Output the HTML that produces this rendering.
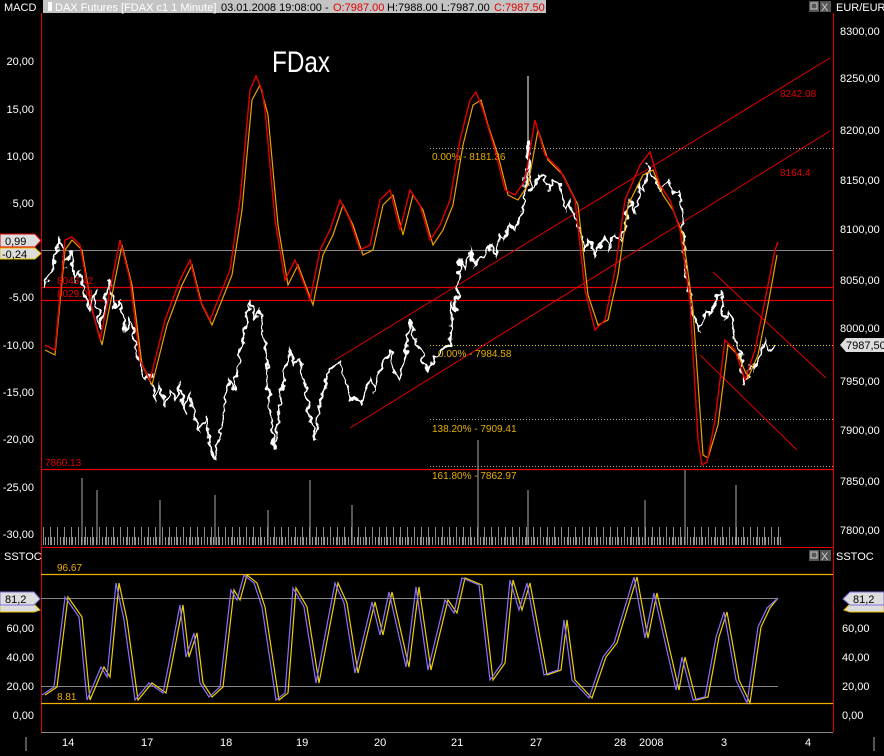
<!DOCTYPE html>
<html><head><meta charset="utf-8"><style>
html,body{margin:0;padding:0;background:#000;}
body{width:884px;height:751px;overflow:hidden;font-family:"Liberation Sans",sans-serif;}
svg text{font-family:"Liberation Sans",sans-serif;font-size:11px;}
</style></head><body>
<svg width="884" height="751" viewBox="0 0 884 751" xmlns="http://www.w3.org/2000/svg">
<defs>
<filter id="jag" x="-5%" y="-10%" width="110%" height="120%"><feTurbulence type="fractalNoise" baseFrequency="0.12" numOctaves="2" seed="3" result="t"/><feDisplacementMap in="SourceGraphic" in2="t" scale="10" xChannelSelector="R" yChannelSelector="G"/></filter>
<pattern id="vol" x="0" y="475" width="3" height="70" patternUnits="userSpaceOnUse"><rect x="0" y="62" width="1" height="8" fill="#999"/></pattern>
<pattern id="vol2" x="1" y="475" width="7" height="70" patternUnits="userSpaceOnUse"><rect x="0" y="52" width="1" height="18" fill="#888"/></pattern>
</defs>
<rect width="884" height="751" fill="#000"/>
<text x="4" y="11" fill="#fff">MACD</text>
<rect x="43" y="0" width="503" height="13" fill="#c4c4c4"/>
<rect x="48" y="2" width="4" height="9" fill="#fff"/>
<text x="55" y="11" fill="#fff">DAX Futures [FDAX c1  1 Minute]</text>
<text x="221" y="11" fill="#000">03.01.2008 19:08:00 -</text>
<text x="333" y="11" fill="#e00000">O:7987.00</text>
<text x="387" y="11" fill="#000">H:7988.00 L:7987.00</text>
<text x="494" y="11" fill="#e00000">C:7987.50</text>
<rect x="809" y="1" width="10" height="11" fill="#555"/><rect x="811" y="3" width="6" height="6" fill="none" stroke="#ccc"/>
<rect x="820" y="1" width="11" height="11" fill="#555"/><text x="821" y="11" fill="#ccc">X</text>
<text x="836" y="11" fill="#fff">EUR/EUR</text>
<line x1="41.5" y1="13" x2="41.5" y2="732" stroke="#e00000"/>
<line x1="833.5" y1="13" x2="833.5" y2="732" stroke="#e00000"/>
<line x1="41" y1="547.5" x2="833" y2="547.5" stroke="#e00000"/>
<line x1="41" y1="732.5" x2="833" y2="732.5" stroke="#888"/>
<g fill="#fff" text-anchor="end">
<text x="34" y="65">20,00</text><text x="34" y="113">15,00</text><text x="34" y="160">10,00</text>
<text x="34" y="207">5,00</text><text x="34" y="301">-5,00</text><text x="34" y="349">-10,00</text>
<text x="34" y="396">-15,00</text><text x="34" y="443">-20,00</text><text x="34" y="491">-25,00</text><text x="34" y="538">-30,00</text>
</g>
<g fill="#fff">
<text x="840" y="35">8300,00</text><text x="840" y="82">8250,00</text><text x="840" y="134">8200,00</text>
<text x="840" y="184">8150,00</text><text x="840" y="233">8100,00</text><text x="840" y="284">8050,00</text>
<text x="840" y="332">8000,00</text><text x="840" y="385">7950,00</text><text x="840" y="434">7900,00</text>
<text x="840" y="485">7850,00</text><text x="840" y="534">7800,00</text>
</g>
<line x1="41" y1="250.5" x2="833" y2="250.5" stroke="#888"/>
<line x1="41" y1="287.5" x2="833" y2="287.5" stroke="#e00000" stroke-width="1.3"/>
<line x1="41" y1="300.5" x2="833" y2="300.5" stroke="#e00000" stroke-width="1.3"/>
<line x1="41" y1="469.5" x2="833" y2="469.5" stroke="#e00000" stroke-width="1.3"/>
<line x1="430" y1="148.5" x2="833" y2="148.5" stroke="#aaa" stroke-dasharray="1,2"/>
<line x1="430" y1="345.5" x2="833" y2="345.5" stroke="#e8d000" stroke-dasharray="1,2"/>
<line x1="430" y1="419.5" x2="833" y2="419.5" stroke="#aaa" stroke-dasharray="1,2"/>
<line x1="430" y1="466.5" x2="833" y2="466.5" stroke="#aaa" stroke-dasharray="1,2"/>
<g stroke="#e00000" stroke-width="1">
<line x1="335" y1="360" x2="830" y2="58"/>
<line x1="350" y1="428" x2="830" y2="131"/>
<line x1="713" y1="272" x2="826" y2="378"/>
<line x1="700" y1="355" x2="797" y2="450"/>
</g>
<text x="272" y="72" fill="#fff" style="font-size:30px" textLength="58" lengthAdjust="spacingAndGlyphs">FDax</text>
<text x="780" y="97" fill="#e00000" style="font-size:10px">8242.08</text>
<text x="780" y="176" fill="#e00000" style="font-size:10px">8164.4</text>
<text x="432" y="160" fill="#e8b000" style="font-size:10px">0.00% - 8181.36</text>
<text x="438" y="357" fill="#e8b000" style="font-size:10px">0.00% - 7984.58</text>
<text x="432" y="432" fill="#e8b000" style="font-size:10px">138.20% - 7909.41</text>
<text x="432" y="479" fill="#e8b000" style="font-size:10px">161.80% - 7862.97</text>
<text x="45" y="466" fill="#e00000" style="font-size:10px">7860.13</text>
<text x="57" y="284" fill="#e00000" style="font-size:10px">8043.42</text>
<text x="57" y="297" fill="#e00000" style="font-size:10px">8029.04</text>
<rect x="43" y="475" width="740" height="70" fill="url(#vol)"/>
<rect x="43" y="475" width="740" height="70" fill="url(#vol2)"/>
<g stroke="#aaa">
<line x1="82" y1="478" x2="82" y2="545"/><line x1="97" y1="490" x2="97" y2="545"/><line x1="160" y1="500" x2="160" y2="545"/>
<line x1="215" y1="495" x2="215" y2="545"/><line x1="310" y1="480" x2="310" y2="545"/><line x1="478" y1="440" x2="478" y2="545"/>
<line x1="528" y1="490" x2="528" y2="545"/><line x1="685" y1="470" x2="685" y2="545"/><line x1="736" y1="485" x2="736" y2="545"/>
<line x1="645" y1="500" x2="645" y2="545"/><line x1="268" y1="510" x2="268" y2="545"/><line x1="352" y1="505" x2="352" y2="545"/>
</g>
<polyline filter="url(#jag)" fill="none" stroke="#fff" stroke-width="2" points="45,290 50,270 55,255 60,240 65,265 70,250 75,280 80,270 85,300 90,310 95,290 100,330 105,300 110,280 115,310 120,300 125,330 130,320 135,340 140,365 145,380 150,375 155,400 160,385 165,405 170,390 175,400 180,385 185,410 190,395 195,420 200,430 205,415 210,445 215,460 220,430 225,400 230,380 235,390 240,350 245,330 250,300 255,320 260,310 265,340 270,420 275,450 280,400 285,370 290,350 295,365 300,360 305,385 310,420 315,440 320,400 325,385 330,370 335,365 340,360 345,380 350,400 355,395 360,405 365,390 370,380 375,390 380,370 385,360 390,350 395,375 400,380 405,360 410,320 415,340 420,350 425,365 430,370 435,355 440,350 445,348 450,345 452,300 456,312 460,260 465,270 470,250 475,265 480,260 485,255 490,245 495,255 500,235 505,240 510,225 515,230 520,215 525,200 528,140 530,190 535,185 540,175 545,180 550,190 555,180 560,185 565,210 570,200 575,220 580,230 585,250 590,240 595,255 600,245 605,235 610,250 615,235 620,240 625,225 630,200 635,215 640,185 645,190 648,165 652,175 655,180 660,190 665,185 670,180 675,195 680,190 683,230 686,270 690,300 695,320 700,330 705,310 710,315 715,305 720,290 725,320 730,310 735,340 740,355 745,385 750,365 755,370 760,355 765,340 770,350 775,345"/>
<line x1="528" y1="76" x2="528" y2="150" stroke="#fff"/>
<polyline fill="none" stroke="#f0a000" stroke-width="1.2" points="45,350 55,355 65,250 72,240 82,250 92,310 102,345 112,295 122,245 132,285 142,365 152,385 167,325 182,285 192,265 202,305 212,325 232,275 242,210 252,100 260,85 268,115 278,225 288,285 298,265 313,305 323,255 333,235 343,205 353,225 363,255 373,250 383,205 393,195 403,235 413,195 423,210 433,245 443,230 453,205 463,145 473,105 481,100 488,125 498,155 508,195 518,200 528,185 538,130 548,160 563,175 578,205 588,295 598,325 608,320 618,275 628,205 643,175 653,170 663,195 673,210 683,235 693,310 703,455 708,458 718,425 728,345 738,355 748,378 758,355 768,305 777,255"/>
<polyline fill="none" stroke="#e00000" stroke-width="1.4" points="45,345 55,350 65,240 72,237 80,245 90,300 100,340 110,290 120,240 130,280 140,360 150,380 165,320 180,280 190,260 200,300 210,320 230,270 240,200 250,90 256,76 262,90 265,110 275,220 285,280 295,260 310,300 320,250 330,230 340,200 350,220 360,250 370,245 380,200 390,190 400,230 410,190 420,205 430,240 440,225 450,200 460,140 470,100 476,92 483,110 495,150 505,190 515,195 525,180 535,120 545,155 560,170 575,200 585,290 595,330 605,320 615,270 625,200 640,165 650,152 660,185 670,200 680,230 690,300 698,440 702,465 707,462 715,420 725,340 735,350 745,380 755,350 765,300 775,250 778,242"/>
<path d="M0,234 H35 L41,240.5 L35,247 H0Z" fill="#ddd" stroke="#e00000"/>
<text x="5" y="245" fill="#000">0,99</text>
<path d="M0,248 H35 L41,253.5 L35,259 H0Z" fill="#ddd" stroke="#e8c000"/>
<text x="2" y="258" fill="#000">-0,24</text>
<path d="M840,345 L846,338 H884 V352 H846Z" fill="#ddd"/>
<text x="846" y="349" fill="#000">7987,50</text>
<text x="4" y="560" fill="#fff">SSTOC</text>
<text x="836" y="560" fill="#fff">SSTOC</text>
<rect x="809" y="550" width="10" height="11" fill="#555"/><rect x="811" y="552" width="6" height="6" fill="none" stroke="#ccc"/>
<rect x="820" y="550" width="11" height="11" fill="#555"/><text x="821" y="560" fill="#ccc">X</text>
<line x1="41" y1="574.5" x2="833" y2="574.5" stroke="#f0b000" stroke-width="1.2"/>
<line x1="41" y1="703.5" x2="833" y2="703.5" stroke="#f0b000" stroke-width="1.2"/>
<line x1="41" y1="598.5" x2="778" y2="598.5" stroke="#888"/>
<line x1="41" y1="686.5" x2="778" y2="686.5" stroke="#888"/>
<text x="57" y="571" fill="#f0b000" style="font-size:10px">96.67</text>
<text x="57" y="700" fill="#f0b000" style="font-size:10px">8.81</text>
<g fill="#fff" text-anchor="end">
<text x="34" y="632">60,00</text><text x="34" y="661">40,00</text><text x="34" y="690">20,00</text><text x="34" y="719">0,00</text>
</g>
<g fill="#fff"><text x="842" y="632">60,00</text><text x="842" y="661">40,00</text><text x="842" y="690">20,00</text><text x="842" y="719">0,00</text></g>
<path d="M0,604 H34 L40,610 L34,612 H0Z" fill="#ddd" stroke="#e8c000"/>
<path d="M0,592 H34 L40,599 L34,605 H0Z" fill="#ddd" stroke="#8070e0"/>
<text x="5" y="603" fill="#000">81,2</text>
<path d="M884,604 H850 L844,610 L850,612 H884Z" fill="#ddd" stroke="#e8c000"/>
<path d="M884,592 H850 L843,599 L850,605 H884Z" fill="#ddd" stroke="#8070e0"/>
<text x="853" y="603" fill="#000">81,2</text>
<polyline fill="none" stroke="#f0d000" stroke-width="1.2" points="45,695 57,687 68,597 82,617 90,700 104,667 110,677 119,583 127,620 138,700 152,683 166,693 172,663 183,605 189,657 197,633 203,683 212,697 223,687 234,590 240,600 247,575 257,583 265,607 279,700 288,693 296,588 307,607 319,683 338,583 347,603 358,673 375,602 383,635 392,592 409,667 419,587 431,670 448,600 457,613 465,578 482,585 493,680 505,663 513,580 522,610 530,583 547,675 561,670 567,620 575,680 592,698 606,657 617,643 637,577 648,638 657,593 668,642 679,690 685,657 696,700 708,697 719,637 727,612 739,680 750,703 761,627 770,608 778,598"/>
<polyline fill="none" stroke="#8a70ff" stroke-width="1.2" points="42,695 54,687 65,597 79,617 87,700 101,667 107,677 116,583 124,620 135,700 149,683 163,693 169,663 180,605 186,657 194,633 200,683 209,697 220,687 231,590 237,600 244,575 254,583 262,607 276,700 285,693 293,588 304,607 316,683 335,583 344,603 355,673 372,602 380,635 389,592 406,667 416,587 428,670 445,600 454,613 462,578 479,585 490,680 502,663 510,580 519,610 527,583 544,675 558,670 564,620 572,680 589,698 603,657 614,643 634,577 645,638 654,593 665,642 676,690 682,657 693,700 705,697 716,637 724,612 736,680 747,703 758,627 767,608 778,598"/>
<g fill="#fff">
<text x="62" y="746">14</text><text x="141" y="746">17</text><text x="220" y="746">18</text><text x="296" y="746">19</text>
<text x="374" y="746">20</text><text x="451" y="746">21</text><text x="530" y="746">27</text><text x="614" y="746">28</text>
<text x="639" y="746">2008</text><text x="721" y="746">3</text><text x="805" y="746">4</text>
</g>
<g stroke="#aaa"><line x1="26" y1="737" x2="26" y2="751"/><line x1="874" y1="737" x2="874" y2="751"/></g>
</svg>
</body></html>
